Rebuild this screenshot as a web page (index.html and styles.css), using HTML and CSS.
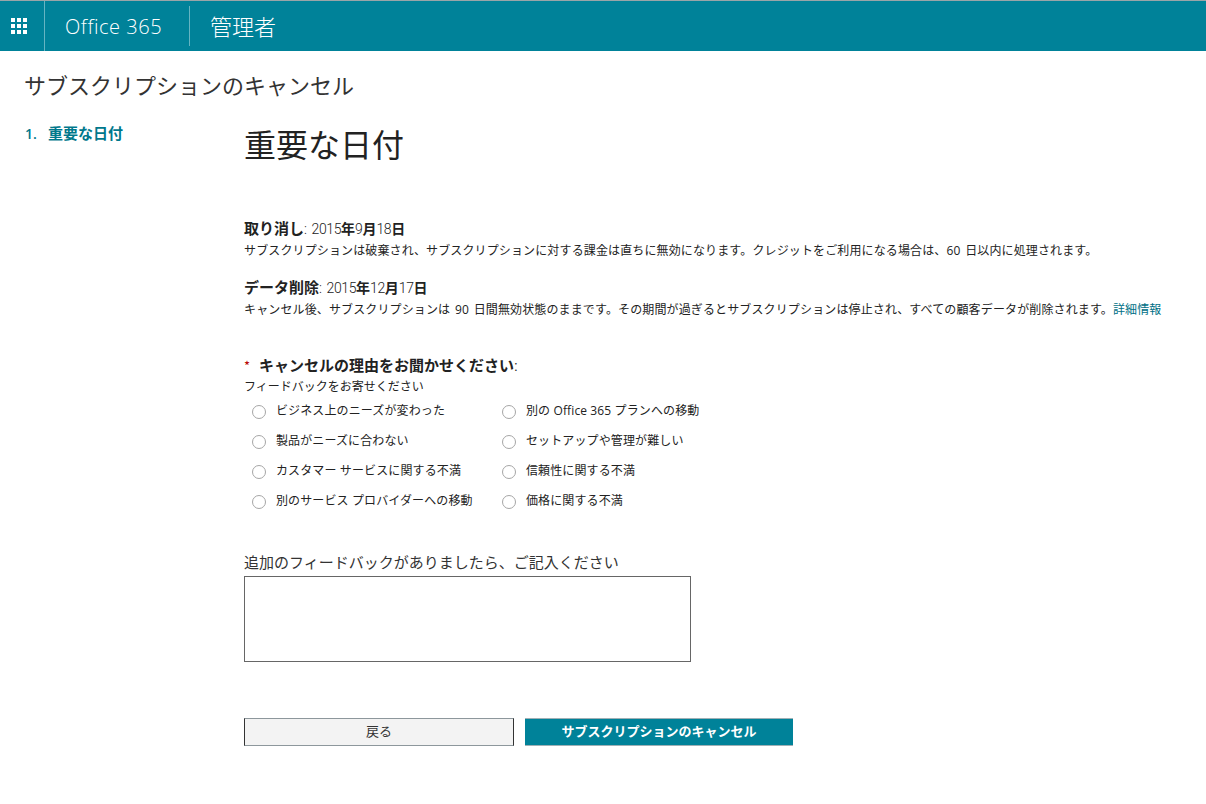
FILE: index.html
```html
<!DOCTYPE html>
<html lang="ja">
<head>
<meta charset="utf-8">
<title>サブスクリプションのキャンセル</title>
<link rel="stylesheet" href="styles.css">
</head>
<body>
<header class="topbar">
  <div class="waffle">
    <svg width="16" height="16" viewBox="0 0 16 16" fill="#fff"><rect x="0" y="0" width="4" height="4"/><rect x="6" y="0" width="4" height="4"/><rect x="12" y="0" width="4" height="4"/><rect x="0" y="6" width="4" height="4"/><rect x="6" y="6" width="4" height="4"/><rect x="12" y="6" width="4" height="4"/><rect x="0" y="12" width="4" height="4"/><rect x="6" y="12" width="4" height="4"/><rect x="12" y="12" width="4" height="4"/></svg>
  </div>
  <div class="brand">Office 365</div>
  <div class="divider"></div>
  <div class="section">管理者</div>
</header>
<h2 class="page-title">サブスクリプションのキャンセル</h2>
<div class="layout">
  <nav class="steps"><span class="step-num">1.</span><span class="step-name">重要な日付</span></nav>
  <main class="content">
    <h1 class="heading">重要な日付</h1>
    <section class="date first">
      <div class="date-line"><b class="date-key">取り消し</b><span class="date-val">: 2015</span><b>年</b><span class="date-val">9</span><b>月</b><span class="date-val">18</span><b>日</b></div>
      <p class="desc">サブスクリプションは破棄され、サブスクリプションに対する課金は直ちに無効になります。クレジットをご利用になる場合は、60 日以内に処理されます。</p>
    </section>
    <section class="date second">
      <div class="date-line"><b class="date-key">データ削除</b><span class="date-val">: 2015</span><b>年</b><span class="date-val">12</span><b>月</b><span class="date-val">17</span><b>日</b></div>
      <p class="desc">キャンセル後、サブスクリプションは 90 日間無効状態のままです。その期間が過ぎるとサブスクリプションは停止され、すべての顧客データが削除されます。<a class="link" href="#">詳細情報</a></p>
    </section>
    <div class="reason-title"><span class="req">*</span><b>キャンセルの理由をお聞かせください</b><span class="colon">:</span></div>
    <div class="reason-sub">フィードバックをお寄せください</div>
    <div class="options">
      <label class="opt"><span class="radio"></span>ビジネス上のニーズが変わった</label>
      <label class="opt"><span class="radio"></span>別の Office 365 プランへの移動</label>
      <label class="opt"><span class="radio"></span>製品がニーズに合わない</label>
      <label class="opt"><span class="radio"></span>セットアップや管理が難しい</label>
      <label class="opt"><span class="radio"></span>カスタマー サービスに関する不満</label>
      <label class="opt"><span class="radio"></span>信頼性に関する不満</label>
      <label class="opt"><span class="radio"></span>別のサービス プロバイダーへの移動</label>
      <label class="opt"><span class="radio"></span>価格に関する不満</label>
    </div>
    <div class="fb-label">追加のフィードバックがありましたら、ご記入ください</div>
    <div class="fb-box"></div>
    <div class="buttons">
      <div class="btn btn-back">戻る</div>
      <div class="btn btn-cancel">サブスクリプションのキャンセル</div>
    </div>
  </main>
</div>
</body>
</html>
```
FILE: styles.css
```css
* { box-sizing: border-box; }
html, body { margin: 0; padding: 0; background: #fff; }
body {
  font-family: "Noto Sans CJK JP", "Open Sans", sans-serif;
  color: #222;
  height: 804px;
  overflow: hidden;
}
.topbar {
  height: 51px;
  background: #008299;
  border-top: 1px solid #9aa5a8;
  display: flex;
  align-items: center;
  color: #fff;
}
.waffle {
  width: 45px;
  height: 50px;
  border-right: 1px solid #66b4c2;
  display: flex;
  align-items: center;
  justify-content: center;
  padding-right: 6px;
  padding-bottom: 1px;
}
.brand {
  font-family: "Open Sans", sans-serif;
  font-weight: 300;
  font-size: 20px;
  letter-spacing: 0.55px;
  width: 144px;
  padding-left: 20px;
}
.divider { width: 1px; height: 40px; background: #66b4c2; }
.section { font-size: 22px; font-weight: 300; padding-left: 20px; margin-top: -3px; }
.page-title {
  margin: 18px 0 0 24px;
  font-size: 22px;
  font-weight: 400;
  line-height: 30px;
  color: #333;
}
.layout { display: flex; padding-left: 25px; margin-top: 24px; }
.steps {
  width: 219px;
  color: #00788c;
  font-size: 15px;
  font-weight: 700;
  line-height: 20px;
  flex: none;
}
.step-num { font-family: "Open Sans", sans-serif; font-size: 14px; display: inline-block; width: 23px; font-weight: 600; }
.content { flex: 1; min-width: 0; }
.heading {
  margin: -2px 0 0;
  font-size: 32px;
  font-weight: 400;
  line-height: 44px;
}
.date.first { margin-top: 53px; }
.date.second { margin-top: 17px; }
.date-line {
  font-size: 14px;
  line-height: 20px;
  white-space: nowrap;
}
.date-key { font-size: 15px; }
.date-val {
  font-family: "Roboto", sans-serif;
  font-weight: 300;
  letter-spacing: -0.4px;
}
.date-val:nth-child(2) { word-spacing: 2px; }
.desc {
  margin: 3px 0 0;
  font-size: 12px;
  line-height: 18px;
  white-space: nowrap;
  letter-spacing: 0.13px;
  word-spacing: 1.5px;
  font-family: "Open Sans", "Noto Sans CJK JP", sans-serif;
}
.link { color: #006f85; text-decoration: none; }
.reason-title {
  margin-top: 36px;
  font-size: 15px;
  line-height: 20px;
  white-space: nowrap;
}
.colon { font-weight: 300; }
.req { color: #b80000; font-size: 13px; display: inline-block; width: 15px; }
.reason-sub { font-size: 12px; line-height: 18px; margin-top: 1px; }
.options {
  display: grid;
  grid-template-columns: 250px 250px;
  grid-auto-rows: 30px;
  margin-top: 8px;
  width: 500px;
}
.opt {
  display: flex;
  align-items: flex-start;
  font-size: 12px;
  line-height: 16px;
  padding-left: 8px;
  white-space: nowrap;
  letter-spacing: 0.12px;
  font-family: "Open Sans", "Noto Sans CJK JP", sans-serif;
}
.radio {
  width: 14px;
  height: 14px;
  border: 1px solid #a6a6a6;
  border-radius: 50%;
  margin: 2px 10px 0 0;
  flex: none;
}
.fb-label { margin-top: 29px; font-size: 15px; line-height: 20px; color: #333; }
.fb-box { width: 447px; height: 86px; border: 1px solid #666; margin-top: 4px; }
.buttons { display: flex; gap: 11px; margin-top: 56px; }
.btn {
  height: 28px;
  display: flex;
  align-items: center;
  justify-content: center;
  font-size: 13px;
  padding-bottom: 3px;
  width: 270px;
}
.btn-back {
  background: #f3f3f3;
  border: 1px solid #8d979c;
  border-left-color: #333;
  border-right-color: #333;
  color: #333;
}
.btn-cancel {
  width: 268px;
  background: #008299;
  color: #fff;
  font-weight: 700;
  border-top: 1px solid #9fb0b5;
  border-bottom: 1px solid #9fb0b5;
}
```
